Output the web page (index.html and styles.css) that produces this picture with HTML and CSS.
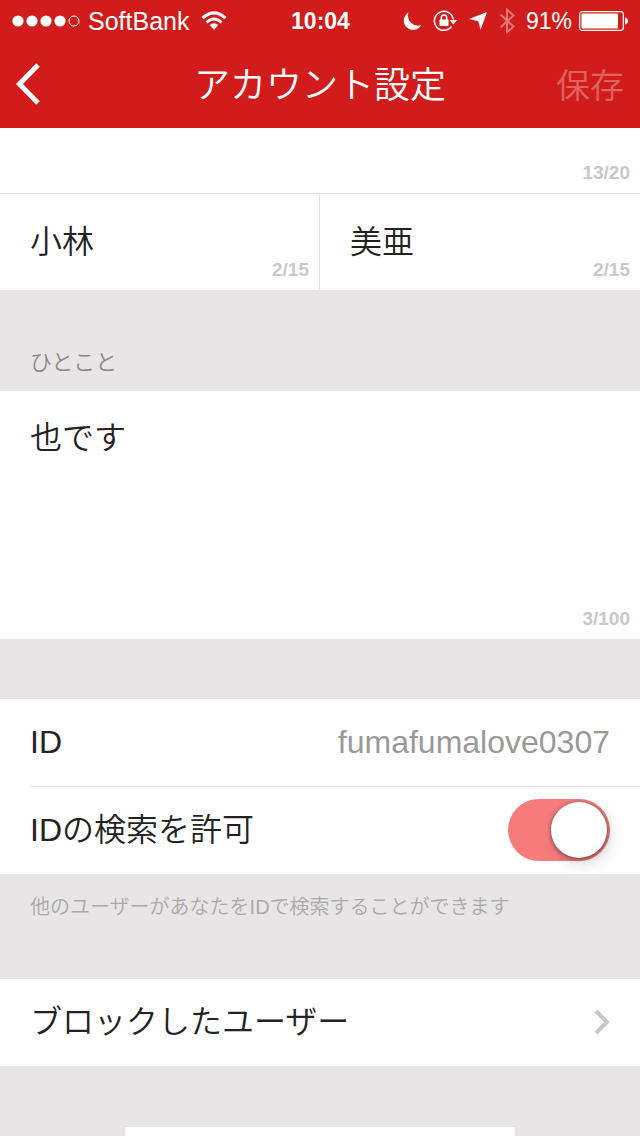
FILE: index.html
```html
<!DOCTYPE html>
<html lang="ja">
<head>
    <meta charset="UTF-8">
    <meta name="viewport" content="width=device-width, initial-scale=1.0">
    <title>アカウント設定</title>
    <link rel="stylesheet" href="styles.css">
</head>
<body>
    <header class="header">
        <div class="status-bar">
            <div class="status-left">
                <svg class="signal" width="68" height="12" viewBox="0 0 68 12">
                    <g fill="#fff">
                        <circle cx="6" cy="6" r="5.6"/>
                        <circle cx="20" cy="6" r="5.6"/>
                        <circle cx="34" cy="6" r="5.6"/>
                        <circle cx="48" cy="6" r="5.6"/>
                    </g>
                    <circle cx="62" cy="6" r="5" fill="none" stroke="#fff"/>
                </svg>
                <span class="carrier">SoftBank</span>
                <svg width="26" height="20" viewBox="0 0 26 20" fill="none" stroke="#fff" stroke-width="3">
                    <path d="M1.500 7.200Q13 -3.400 24.500 7.200"/>
                    <path d="M5.500 11.500Q13 4.500 20.500 11.500"/>
                    <path d="M8.800 14Q13 10.400 17.200 14L13 19Z" fill="#fff" stroke="none"/>
                </svg>
            </div>
            <span class="clock">10:04</span>
            <div class="status-right">
                <svg width="20" height="20" viewBox="0 0 20 20" fill="#fff">
                    <path d="M6.500 1.500A9.300 9.300 0 1 0 19.300 14A10 10 0 0 1 6.500 1.500Z"/>
                </svg>
                <svg width="24" height="22" viewBox="0 0 24 22">
                    <path d="M18.500 16.500A9.500 9.500 0 1 1 20.300 9.500" fill="none" stroke="#fff" stroke-width="1.500"/>
                    <path d="M16.500 10H24L20.300 14.500Z" fill="#fff"/>
                    <rect x="6.500" y="9.500" width="9" height="6.500" rx=".8" fill="#fff"/>
                    <path d="M8.300 10V7.700a2.700 2.700 0 0 1 5.400 0V10" fill="none" stroke="#fff" stroke-width="1.500"/>
                </svg>
                <svg width="20" height="20" viewBox="0 0 20 20" fill="#fff">
                    <path d="M19 1L12.500 19L10.300 10.300L1 8Z"/>
                </svg>
                <svg class="bluetooth" width="16" height="26" viewBox="0 0 16 26" fill="none" stroke="#fff" stroke-width="2">
                    <path d="M1.500 6.500L14.500 18.500L8 24.500V1.500L14.500 7.500L1.500 19.500"/>
                </svg>
                <span class="percent">91%</span>
                <svg width="50" height="20" viewBox="0 0 50 20">
                    <rect x=".7" y=".7" width="43.600" height="18.600" rx="2.500" fill="none" stroke="#fff" stroke-width="1.200"/>
                    <rect x="2.500" y="2.500" width="36.500" height="15" rx="1" fill="#fff"/>
                    <path d="M46 6.500Q49 7.500 49 10T46 13.500Z" fill="#fff"/>
                </svg>
            </div>
        </div>
        <nav class="nav-bar">
            <button type="button" class="back" aria-label="戻る">
                <svg width="24" height="42" viewBox="0 0 24 42" fill="none" stroke="#fff" stroke-width="5">
                    <path d="M22 2L3.500 21L22 40"/>
                </svg>
            </button>
            <h1>アカウント設定</h1>
            <button type="button" class="save" disabled>保存</button>
        </nav>
    </header>

    <main>
        <form>
            <div class="field field-nickname">
                <input type="text" aria-label="ニックネーム">
                <span class="count">13/20</span>
            </div>
            <div class="name-row">
                <div class="field">
                    <input type="text" value="小林" aria-label="姓">
                    <span class="count">2/15</span>
                </div>
                <div class="field">
                    <input type="text" value="美亜" aria-label="名">
                    <span class="count">2/15</span>
                </div>
            </div>

            <label class="section-label" for="comment">ひとこと</label>
            <div class="field field-comment">
                <textarea id="comment">也です</textarea>
                <span class="count">3/100</span>
            </div>

            <div class="group">
                <div class="row">
                    <span>ID</span>
                    <span class="user-id">fumafumalove0307</span>
                </div>
                <div class="row">
                    <label for="id-search">IDの検索を許可</label>
                    <input type="checkbox" class="switch" id="id-search" checked>
                </div>
            </div>
            <p class="hint">他のユーザーがあなたをIDで検索することができます</p>
        </form>

        <a class="row link-row" href="#">
            <span>ブロックしたユーザー</span>
            <svg width="16" height="26" viewBox="0 0 16 26" fill="none" stroke="#c7c7c7" stroke-width="4">
                <path d="M2 2L13 13L2 24"/>
            </svg>
        </a>
        <div class="panel"></div>
    </main>
</body>
</html>
```

FILE: styles.css
```css
* {
    box-sizing: border-box;
}

body {
    margin: 0;
    height: 100vh;
    overflow: hidden;
    background-color: #e7e5e6;
    color: #222;
    font-family: "Liberation Sans", "Noto Sans CJK JP", sans-serif;
    font-size: 32px;
    font-weight: 350;
    line-height: 40px;
}

button, input, textarea {
    margin: 0;
    padding: 0;
    border: none;
    background: none;
    color: inherit;
    font: inherit;
}

svg {
    display: block;
    flex-shrink: 0;
}

/* header */
.header {
    background-color: #d11c1b;
    color: #fff;
}

.status-bar {
    display: grid;
    grid-template-columns: 1fr auto 1fr;
    align-items: center;
    height: 40px;
    padding: 1px 11px 0 12px;
    font-size: 23px;
}

.status-left, .status-right {
    display: flex;
    align-items: center;
}

.carrier {
    margin: 0 12px 0 8px;
    font-size: 25px;
}

.clock {
    font-weight: bold;
}

.status-right {
    justify-content: flex-end;
    gap: 11px;
}

.bluetooth {
    opacity: 0.4;
}

.percent {
    margin-right: -4px;
}

.nav-bar {
    display: grid;
    grid-template-columns: 1fr auto 1fr;
    align-items: center;
    height: 88px;
    padding: 0 16px;
}

.nav-bar h1 {
    margin: 0;
    padding-top: 4px;
    font-size: 36px;
    font-weight: 350;
}

.back {
    justify-self: start;
}

.save {
    justify-self: end;
    padding-top: 4px;
    font-size: 34px;
    opacity: 0.3;
}

/* text fields */
.field {
    display: grid;
    background-color: #fff;
}

.field input, .field textarea, .count {
    grid-area: 1 / 1;
}

.field input {
    width: 100%;
    height: 96px;
    padding: 0 30px 6px;
}

.field textarea {
    height: 248px;
    padding: 27px 30px;
    resize: none;
}

.count {
    align-self: end;
    justify-self: end;
    padding: 0 10px 10px;
    color: #c8c8c8;
    font-size: 19px;
    font-weight: bold;
    line-height: 20px;
}

.field-nickname {
    border-bottom: 1px solid #e2e2e2;
}

.field-nickname input {
    height: 65px;
}

.name-row {
    display: grid;
    grid-template-columns: 1fr 1fr;
}

.name-row .field:first-child {
    border-right: 1px solid #e2e2e2;
}

.section-label {
    display: block;
    padding: 58px 30px 13px;
    color: #888;
    font-size: 22px;
    line-height: 30px;
}

/* rows */
.group {
    margin-top: 60px;
    background-color: #fff;
}

.row {
    display: flex;
    align-items: center;
    justify-content: space-between;
    height: 87px;
    padding: 0 30px 2px 0;
}

.group .row {
    margin-left: 30px;
}

.group .row + .row {
    height: 88px;
    border-top: 1px solid #e2e2e2;
}

.user-id {
    color: #999;
}

.switch {
    appearance: none;
    width: 102px;
    height: 62px;
    padding: 3px;
    border-radius: 31px;
    background-color: #f67c7c;
}

.switch::after {
    content: "";
    display: block;
    width: 56px;
    height: 56px;
    border-radius: 50%;
    background-color: #fff;
    box-shadow: 0 1px 4px rgba(0, 0, 0, 0.5), 4px 6px 14px rgba(0, 0, 0, 0.15);
}

.switch:checked::after {
    margin-left: auto;
}

.hint {
    margin: 0;
    padding: 18px 30px 57px;
    color: #aaa;
    font-size: 20px;
    line-height: 30px;
}

.link-row {
    padding-left: 30px;
    background-color: #fff;
    color: inherit;
    text-decoration: none;
}

.panel {
    width: 61%;
    height: 88px;
    margin: 61px auto 0;
    background-color: #fff;
}
```
